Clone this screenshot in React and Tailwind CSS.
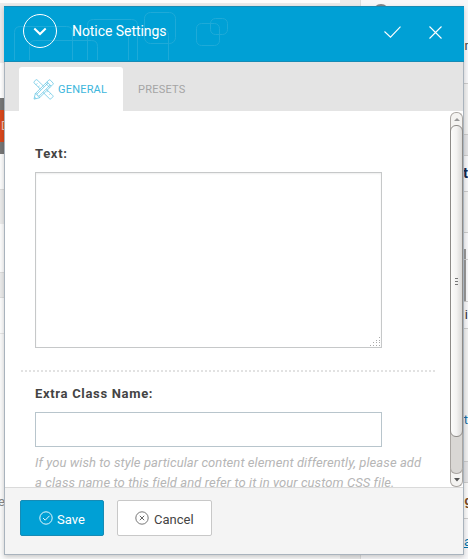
const font = "font-['Roboto','Liberation_Sans',sans-serif]";

function Backdrop() {
  return (
    <div className="flex h-full w-full bg-[#ececec]">
      <div className="flex w-[340px] flex-col overflow-hidden">
        <div className="h-[3px] shrink-0 bg-[#fcfcfc]" />
        <div className="h-[60px] shrink-0 bg-[#ebebeb]" />
        <div className="h-[35px] shrink-0 bg-white" />
        <div className="h-3 shrink-0 bg-[#777]" />
        <div className="h-8 shrink-0 bg-[#d9481c] pl-px text-[12px] leading-8 text-[#f3c4b4]">D</div>
        <div className="h-3 shrink-0 bg-[#777]" />
        <div className="h-[36px] shrink-0 border-b border-[#ddd] bg-[#fcfcfc]" />
        <div className="h-[34px] shrink-0 bg-[#ebebeb]" />
        <div className="h-[48px] shrink-0 bg-[#fcfcfc]" />
        <div className="h-[26px] shrink-0 border-y border-[#ddd] bg-[#ebebeb]" />
        <div className="h-[36px] shrink-0 border-b border-[#e6e6e6] bg-[#fcfcfc]" />
        <div className="flex h-[225px] shrink-0 items-end bg-[#fafafa] pb-[47px]">
          <span className="-ml-[2px] text-[13px] leading-5 text-[#888]">e</span>
        </div>
      </div>
      <div className="w-[20px] bg-[#ebebeb]" />
      <div className="flex flex-1 flex-col overflow-hidden border-l border-[#ddd] bg-[#f7f7f9] text-right text-[13px]">
        <div className="h-[36px] shrink-0 pl-3 pt-1"><div className="h-4 w-4 rounded-full bg-[#82878c]" /></div>
        <div className="h-[47px] shrink-0 leading-5 text-[#444]"><span className="-mr-[8px]">m</span></div>
        <div className="h-[51px] shrink-0 border-t border-[#ccc] bg-[#f1f1f1]" />
        <div className="h-[21px] shrink-0 border-t border-[#ccc] bg-[#e4e4e6]" />
        <div className="h-[36px] shrink-0 border-t border-[#ccc] text-[15px] font-bold leading-[34px] text-[#142a50]">t</div>
        <div className="h-[41px] shrink-0 border-t border-[#ccc] bg-[#f1f1f1]" />
        <div className="flex h-[27px] shrink-0 items-end justify-end border-t border-[#ccc] pr-[2px]"><div className="h-[10px] w-[2px] bg-[#999]" /></div>
        <div className="flex h-[42px] shrink-0 justify-end border-t border-[#ccc] pr-[2px]"><div className="w-[2px] bg-[#999]" /></div>
        <div className="flex h-[27px] shrink-0 justify-end border-t border-[#ccc] leading-[26px] text-[#333]">
          <span>i</span>
        </div>
        <div className="h-[133px] shrink-0 border-t border-[#ccc] bg-[#f1f1f1] pt-[79px] leading-[24px] text-[#1a6b9f]">t</div>
        <div className="h-[22px] shrink-0 border-y border-[#ccc] bg-[#e4e4e6]" />
        <div className="h-[36px] shrink-0 border-b border-[#ccc] bg-[#fafafa] font-bold leading-9 text-[#7a4a20]"><span className="-mr-[4px]">g</span></div>
        <div className="h-[40px] shrink-0 bg-[#f7f7f9] pt-[13px] leading-5 text-[#0073aa]"><span className="-mr-[3px] underline">a</span></div>
      </div>
    </div>
  );
}

function PencilRuler() {
  return (
    <svg width="21" height="21" viewBox="0 0 21 21" fill="none" stroke="#4abbdf" strokeWidth="0.65" strokeLinejoin="round">
      <path d="M7.500 10.200 1 3.800Q.5 3.200 1 2.700L2.900.9Q3.500.4 4.100.9L10.600 7.200M13.500 10.300 19.900 16.700Q20.400 17.200 19.900 17.800L17.800 19.900Q17.200 20.400 16.700 19.900L10.200 13.500M3 5.700 4.400 4.300M5.300 8 6.500 6.900M15.200 12.100 14.100 13.200M17.500 14.400 16.300 15.600" />
      <path d="M1 20.100 2.300 14.600 15.800 1.100Q16.500.5 17.200 1.100L20 3.900Q20.600 4.600 20 5.300L6.500 18.800ZM2.300 14.600 4 15.100 4.400 16.700 6 17.200 6.500 18.800M4 15.100 15.200 3.900M6 17.200 17.200 6M14 2.900 18.200 7.100M12.600 4.300 16.800 8.500M1.500 18 3.100 19.500" />
    </svg>
  );
}

function Header() {
  return (
    <div className="relative flex h-[56px] shrink-0 items-center border-y border-[#168bb5] bg-[#00a0d5] pl-[19px] pr-[22px]">
      <svg className="absolute left-0 top-0" width="230" height="54" fill="none" stroke="#1eaad8" strokeWidth="1">
        <path d="M10.500 53V25.500q0-6 6-6H62.500q6 0 6 6V53M25.500 53V39.500q0-6 6-6H87.500q6 0 6 6V53M83.500 53V18.500q0-6 6-6H127.500q6 0 6 6V53M124.500 53V28.500q0-6 6-6h28q6 0 6 6V53" />
        <rect x="140.500" y="5.500" width="31" height="31" rx="6" />
        <rect x="192.500" y="16.500" width="23" height="22" rx="5" />
        <rect x="206.500" y="11.500" width="17" height="16" rx="5" />
      </svg>
      <svg className="relative -mt-[6px]" width="34" height="34" fill="none" stroke="#fff">
        <circle cx="17" cy="17" r="16.500" strokeWidth="1" />
        <path d="M11.300 14.500 17 20 22.700 14.500" strokeWidth="2" />
      </svg>
      <h1 className="relative -mt-[7px] ml-[15px] text-[14px] leading-5 tracking-[-0.06px] text-white">Notice Settings</h1>
      <svg className="ml-auto mt-[-4px]" width="17" height="12" fill="none" stroke="#fff" strokeWidth="1.100"><path d="M.5 5.500 6.500 11.200 16.500.6" /></svg>
      <svg className="ml-[28px] mt-[-4px]" width="13" height="13" fill="none" stroke="#fff" strokeWidth="1.100"><path d="m.5.500 12 12m0-12-12 12" /></svg>
    </div>
  );
}

function Scrollbar() {
  return (
    <div className="flex w-[13px] shrink-0 flex-col pt-px">
      <div className="flex h-[19px] shrink-0 justify-center rounded-t-[6px] border border-b-0 border-[#aaa6a2] bg-[#f4f3f1] pt-[5px]">
        <svg width="6" height="4"><path d="M0 3 3 0 6 3Z" fill="#999" /></svg>
      </div>
      <div className="relative -mt-[6px] flex h-[312px] shrink-0 flex-col items-center justify-center gap-[2px] rounded-[6px] border border-[#8e8b88] bg-linear-to-r from-[#fcfcfb] via-[#f3f2f1] to-[#dad9d7]">
        <div className="h-px w-[3px] bg-[#777]" />
        <div className="h-px w-[3px] bg-[#777]" />
        <div className="h-px w-[3px] bg-[#777]" />
      </div>
      <div className="-mt-[8px] flex flex-1 flex-col justify-end rounded-b-[6px] bg-[#f4f3f1]">
        <div className="flex-1 rounded-b-[6px] border border-t-0 border-[#aaa6a2] bg-[#d9d7d4]" />
        <div className="-mt-[5px] flex h-[18px] justify-center rounded-b-[6px] border border-t-0 border-[#aaa6a2] pt-[9px]">
          <svg width="6" height="4"><path d="M0 0H6L3 3.500Z" fill="#555" /></svg>
        </div>
      </div>
    </div>
  );
}

function Content() {
  return (
    <div className="flex h-[376px] shrink-0 overflow-hidden bg-white">
      <div className="flex min-w-0 flex-1 flex-col pl-[16px] pr-[14px]">
        <label className="ml-[14px] mt-[33px] text-[13px] font-bold leading-5 tracking-[0.68px] text-[#444]">Text:</label>
        <div className="ml-[14px] mt-[8px] flex h-[176px] w-[347px] shrink-0 items-end justify-end border border-[#c6c8c9] bg-white shadow-[inset_0_1px_2px_rgba(0,0,0,0.07)]">
          <svg width="11" height="11" fill="#aaa">
            <path d="M9 1h1v1H9zM9 4h1v1H9zM6 4h1v1H6zM9 6h1v1H9zM6 6h1v1H6zM3 6h1v1H3zM9 9h1v1H9zM6 9h1v1H6zM3 9h1v1H3zM0 9h1v1H0z" />
          </svg>
        </div>
        <div className="mt-[22px] h-[2px] w-[414px] shrink-0 bg-[repeating-linear-gradient(90deg,#e2e2e2_0_2px,transparent_2px_4px)]" />
        <label className="ml-[14px] mt-[12px] text-[13px] font-bold leading-5 tracking-[0.68px] text-[#444]">Extra Class Name:</label>
        <input className="ml-[14px] mt-[8px] h-[35px] w-[347px] shrink-0 border border-[#b8c5cc] bg-white outline-none" />
        <p className="ml-[14px] mt-[6px] whitespace-nowrap text-[13px] italic leading-5 tracking-[0.075px] text-[#b6b6b6]">
          If you wish to style particular content element differently, please add<br />
          a class name to this field and refer to it in your custom CSS file.
        </p>
      </div>
      <Scrollbar />
    </div>
  );
}

function Footer() {
  return (
    <div className="flex h-[67px] shrink-0 border-t border-[#dadada] bg-[#f4f4f4] pl-[15px] pt-[12px]">
      <button className="flex h-[36px] w-[84px] items-center rounded-[2px] border border-[#168bb5] bg-[#00a0d5] pl-[18px] text-[13px] text-white">
        <svg className="mr-[4px]" width="14" height="14" fill="none" stroke="#fff"><circle cx="7" cy="7" r="6.200" strokeWidth=".9" /><path d="m4 7 2.200 2.200L10.500 4.800" strokeWidth=".9" /></svg>
        <span className="mt-[4px]">Save</span>
      </button>
      <button className="ml-[13px] flex h-[36px] w-[95px] items-center rounded-[2px] border border-[#c8c8c8] bg-white pl-[17px] text-[13px] text-[#444]">
        <svg className="mr-[5px]" width="14" height="14" fill="none" stroke="#555"><circle cx="7" cy="7" r="6.200" strokeWidth=".8" /><path d="m4.800 4.800 4.400 4.400m0-4.400L4.800 9.200" strokeWidth=".9" /></svg>
        <span className="mt-[4px]">Cancel</span>
      </button>
    </div>
  );
}

export default function App() {
  return (
    <div className={`relative h-[559px] w-[468px] overflow-hidden ${font}`}>
      <Backdrop />
      <div className="absolute left-[4px] top-[6px] flex h-[549px] w-[460px] flex-col shadow-[0_2px_5px_rgba(0,0,0,0.2)]">
        <Header />
        <div className="flex min-h-0 flex-1 flex-col border border-t-0 border-[#a9b3bd]">
          <div className="flex h-[49px] shrink-0 bg-[#e4e4e4] pl-[14px] pt-[5px] text-[11px]">
            <div className="flex h-[44px] w-[104px] items-center rounded-t-[3px] bg-white pl-[14px] text-[#3db6dc]">
              <PencilRuler />
              <span className="ml-[4px] mt-[2px] tracking-[0.2px]">GENERAL</span>
            </div>
            <div className="flex h-[44px] items-center pl-[15px] text-[#a5a5a5]"><span className="mt-[2px] tracking-[0.25px]">PRESETS</span></div>
          </div>
          <Content />
          <Footer />
        </div>
      </div>
    </div>
  );
}
